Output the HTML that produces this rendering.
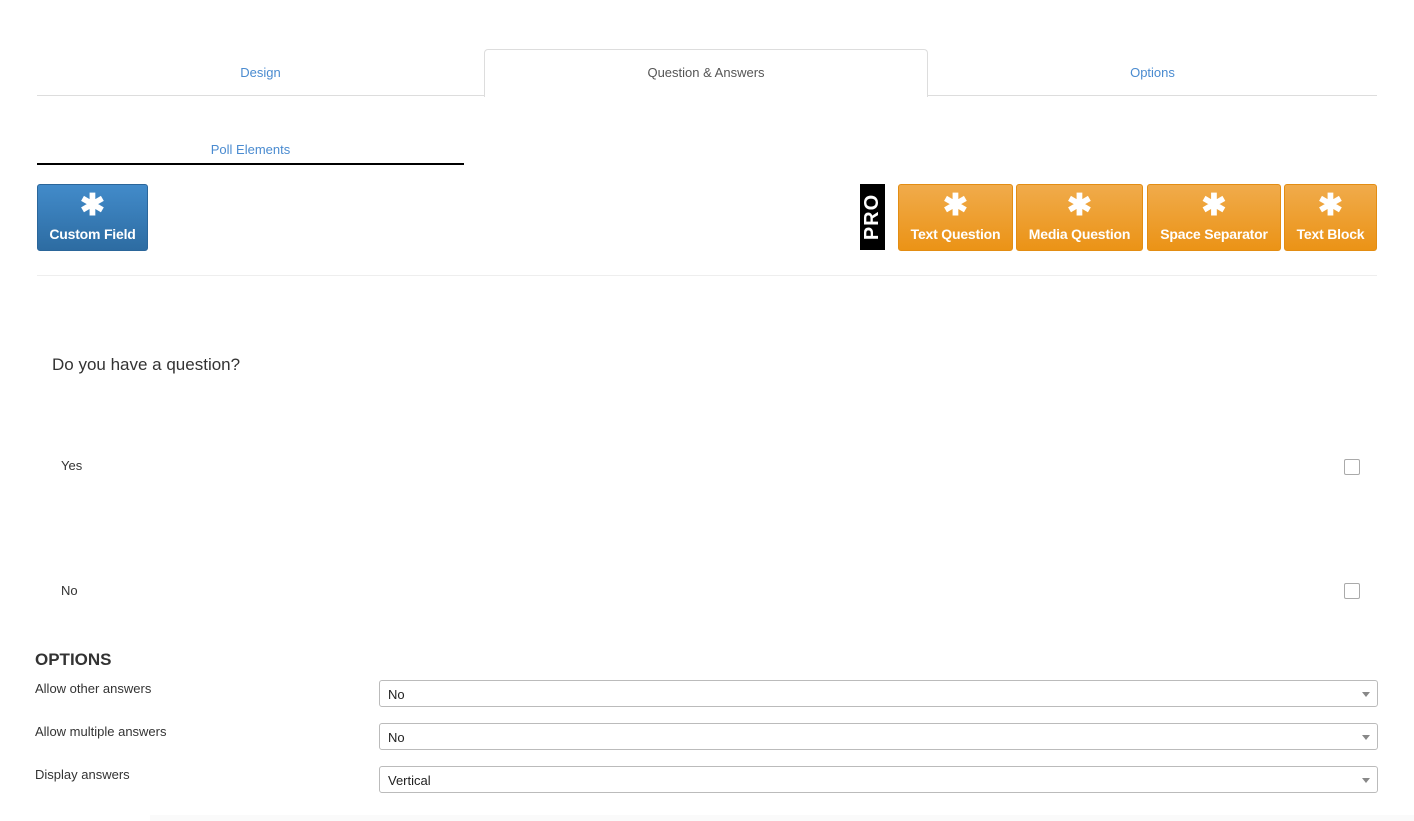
<!DOCTYPE html>
<html><head><style>
body{margin:0;width:1414px;height:821px;background:#fff;font-family:"Liberation Sans",sans-serif;color:#333;position:relative;overflow:hidden}
.a{position:absolute}
.tab{position:absolute;top:50px;height:46px;line-height:46px;text-align:center;font-size:13px;color:#4a8bd0}
.btn{position:absolute;top:184px;height:67px;border-radius:3px;color:#fff;font-weight:bold;font-size:14px;text-align:center;box-sizing:border-box}
.or{background:linear-gradient(#f0ab4b,#eb9316);border:1px solid #e38d13}
.bl{background:linear-gradient(#428bca,#2d6ca2);border:1px solid #2b669a}
.st{font-size:30px;line-height:22px;display:block;margin-top:10px;height:22px}
.lb{display:block;margin-top:9px;letter-spacing:-0.2px}
.sel{position:absolute;left:379px;width:999px;height:27px;border:1px solid #bbb;border-radius:3px;box-sizing:border-box;font-size:13px;line-height:27px;padding-left:8px;color:#222}
.sel:after{content:"";position:absolute;right:7px;top:11px;border-left:4px solid transparent;border-right:4px solid transparent;border-top:5px solid #888}
.lab{position:absolute;left:35px;font-size:13px;color:#333}
.cb{position:absolute;left:1344px;width:14px;height:14px;border:1px solid #aaa;border-radius:2px}
</style></head><body>
<div class="a" style="left:37px;top:95px;width:1340px;height:1px;background:#ddd"></div>
<div class="tab" style="left:37px;width:447px">Design</div>
<div class="a" style="left:484px;top:49px;width:442px;height:47px;border:1px solid #ddd;border-bottom:none;border-radius:4px 4px 0 0;background:#fff"></div>
<div class="tab" style="left:484px;width:444px;color:#555">Question &amp; Answers</div>
<div class="tab" style="left:928px;width:449px">Options</div>
<div class="a" style="left:37px;top:142px;width:427px;text-align:center;font-size:13px;color:#4a8bd0">Poll Elements</div>
<div class="a" style="left:37px;top:163px;width:427px;height:2px;background:#000"></div>
<div class="btn bl" style="left:37px;width:111px"><span class="st">✱</span><span class="lb">Custom Field</span></div>
<div class="a" style="left:860px;top:184px;width:25px;height:66px;background:#000"></div>
<div class="a" style="left:839px;top:206px;width:66px;height:22px;transform:rotate(-90deg);color:#fff;font-weight:bold;font-size:20px;line-height:22px;text-align:center;letter-spacing:1px">PRO</div>
<div class="btn or" style="left:898px;width:115px"><span class="st">✱</span><span class="lb">Text Question</span></div>
<div class="btn or" style="left:1016px;width:127px"><span class="st">✱</span><span class="lb">Media Question</span></div>
<div class="btn or" style="left:1147px;width:134px"><span class="st">✱</span><span class="lb">Space Separator</span></div>
<div class="btn or" style="left:1284px;width:93px"><span class="st">✱</span><span class="lb">Text Block</span></div>
<div class="a" style="left:37px;top:275px;width:1340px;height:1px;background:#eee"></div>
<div class="a" style="left:52px;top:355px;font-size:17px;color:#333">Do you have a question?</div>
<div class="a" style="left:61px;top:458px;font-size:13px">Yes</div>
<div class="cb" style="top:459px"></div>
<div class="a" style="left:61px;top:583px;font-size:13px">No</div>
<div class="cb" style="top:583px"></div>
<div class="a" style="left:35px;top:650px;font-size:17px;font-weight:bold;color:#333">OPTIONS</div>
<div class="lab" style="top:681px">Allow other answers</div>
<div class="sel" style="top:680px">No</div>
<div class="lab" style="top:724px">Allow multiple answers</div>
<div class="sel" style="top:723px">No</div>
<div class="lab" style="top:767px">Display answers</div>
<div class="sel" style="top:766px">Vertical</div>
<div class="a" style="left:150px;top:815px;width:1264px;height:6px;background:#fafafa"></div>
</body></html>
